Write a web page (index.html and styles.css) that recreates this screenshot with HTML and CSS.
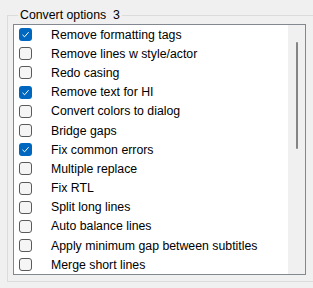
FILE: index.html
```html
<!DOCTYPE html>
<html lang="en">
<head>
  <meta charset="UTF-8">
  <title>Convert options</title>
  <link rel="stylesheet" href="styles.css">
</head>
<body>

  <!-- Group box -->
  <fieldset class="group">
    <legend>Convert options&nbsp;&nbsp;3</legend>

    <div class="listbox">
      <ul class="items">
        <li><span class="check on"><svg viewBox="0 0 13 13"><path d="M3.5 6.8 L5.6 8.8 L9.6 4.2"/></svg></span>Remove formatting tags</li>
        <li><span class="check"></span>Remove lines w style/actor</li>
        <li><span class="check"></span>Redo casing</li>
        <li><span class="check on"><svg viewBox="0 0 13 13"><path d="M3.5 6.8 L5.6 8.8 L9.6 4.2"/></svg></span>Remove text for HI</li>
        <li><span class="check"></span>Convert colors to dialog</li>
        <li><span class="check"></span>Bridge gaps</li>
        <li><span class="check on"><svg viewBox="0 0 13 13"><path d="M3.5 6.8 L5.6 8.8 L9.6 4.2"/></svg></span>Fix common errors</li>
        <li><span class="check"></span>Multiple replace</li>
        <li><span class="check"></span>Fix RTL</li>
        <li><span class="check"></span>Split long lines</li>
        <li><span class="check"></span>Auto balance lines</li>
        <li><span class="check"></span>Apply minimum gap between subtitles</li>
        <li><span class="check"></span>Merge short lines</li>
      </ul>
      <div class="scrollbar">
        <div class="thumb"></div>
      </div>
    </div>
  </fieldset>

</body>
</html>
```

FILE: styles.css
```css
body {
  margin: 0;
  background-color: #f0f0f0;
  font-family: "Liberation Sans", Arial, sans-serif;
  font-size: 12px;
  color: #000;
  overflow: hidden;
}

.group {
  margin: 8px 0 0 7px;
  padding: 2px 0 6px 5px;
  width: 300px;
  border: 1px solid #dcdcdc;
  border-right: none;
}

.group legend {
  margin-left: 5px;
  padding: 0 2px;
  line-height: 14px;
  font-size: 12.3px;
}

.listbox {
  display: flex;
  width: 291px;
  height: 249px;
  border: 1px solid #828790;
  background-color: #fff;
}

.items {
  list-style: none;
  margin: 0;
  padding: 0;
  flex: 1;
}

.items li {
  display: flex;
  align-items: center;
  height: 19.2px;
  padding-left: 5px;
  font-size: 12.3px;
  white-space: nowrap;
}

.check {
  width: 11px;
  height: 11px;
  margin-right: 19px;
  border: 1px solid #5a5a5a;
  border-radius: 3px;
  background-color: #f5f5f5;
  flex-shrink: 0;
}

.check.on {
  width: 13px;
  height: 13px;
  border: none;
  background-color: #0067c0;
}

.check svg {
  display: block;
  width: 13px;
  height: 13px;
}

.check path {
  fill: none;
  stroke: #fff;
  stroke-width: 1;
}

.scrollbar {
  width: 17px;
  background-color: #f0f0f0;
  display: flex;
  justify-content: center;
  padding-top: 17px;
}

.thumb {
  width: 2px;
  height: 107px;
  border-radius: 1px;
  background-color: #858585;
}
```
